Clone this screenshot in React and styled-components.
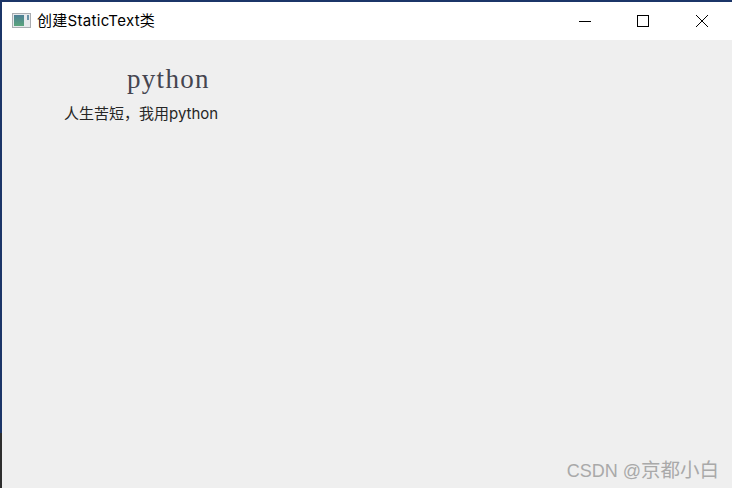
import React from 'react';
import styled, { createGlobalStyle } from 'styled-components';

const GlobalStyle = createGlobalStyle`
    html, body {
        margin: 0;
        padding: 0;
        width: 732px;
        height: 488px;
        overflow: hidden;
        background: #efefef;
    }
`;

const CJK = `Inter, "Noto Sans CJK SC", sans-serif`;

const Page = styled.div`
    display: flex;
    width: 732px;
    height: 488px;
`;

const DesktopEdge = styled.div`
    display: flex;
    flex-direction: column;
    flex: 0 0 2px;
    background: #1b3568;
    &::after {
        content: '';
        margin-top: auto;
        height: 55px;
        background: #2e2e2e;
    }
`;

const Window = styled.div`
    flex: 1;
    display: flex;
    flex-direction: column;
    border-top: 2px solid #1b3568;
    min-width: 0;
`;

const TitleBar = styled.div`
    display: flex;
    align-items: center;
    height: 38px;
    padding-left: 10px;
    background: #fff;
    flex: none;
`;

const AppIcon = styled.svg`
    width: 20px;
    height: 16px;
    margin-right: 5px;
    flex: none;
`;

const Title = styled.span`
    font: 15px/20px ${CJK};
    letter-spacing: 0.3px;
    color: #000;
`;

const Controls = styled.div`
    display: flex;
    margin-left: auto;
    height: 100%;
    padding-right: 1px;
`;

const ControlButton = styled.div`
    display: flex;
    align-items: center;
    justify-content: center;
    width: 58.5px;
    height: 100%;
    padding-bottom: 1px;
    box-sizing: border-box;
    svg {
        width: 14px;
        height: 14px;
    }
`;

const Body = styled.div`
    flex: 1;
    display: flex;
    flex-direction: column;
    background: #efefef;
    position: relative;
`;

const Heading = styled.div`
    margin: 25px 0 0 125px;
    font: 27px/28px "Liberation Serif", serif;
    letter-spacing: 1.3px;
    color: #45454f;
`;

const Label = styled.div`
    margin: 12px 0 0 62px;
    font: 15px/18px ${CJK};
    color: #262626;
`;

const Watermark = styled.div`
    position: absolute;
    right: 13px;
    bottom: 6px;
    font: 19.5px/22px "Noto Sans CJK SC", sans-serif;
    color: #a9a9a9;
`;

const WatermarkTag = styled.span`
    font: 18px/22px "Liberation Sans", sans-serif;
`;

const App = () => (
    <>
        <GlobalStyle />
        <Page>
            <DesktopEdge />
            <Window>
                <TitleBar>
                    <AppIcon viewBox="0 0 20 16">
                        <defs>
                            <linearGradient id="pane" x1="0" y1="0" x2="0" y2="1">
                                <stop offset="0" stopColor="#4d7f96" />
                                <stop offset="1" stopColor="#5aa57c" />
                            </linearGradient>
                        </defs>
                        <rect x="0.5" y="0.5" width="18" height="14" fill="#e6e9ec" stroke="#a9adb2" />
                        <rect x="2" y="2" width="10" height="11" fill="url(#pane)" />
                        <rect x="15" y="2" width="2" height="5" fill="#6a93a8" />
                    </AppIcon>
                    <Title>创建StaticText类</Title>
                    <Controls>
                        <ControlButton>
                            <svg viewBox="0 0 14 14"><path d="M1 7.5H13" stroke="#000" fill="none" /></svg>
                        </ControlButton>
                        <ControlButton>
                            <svg viewBox="0 0 14 14"><rect x="1.5" y="1.5" width="11" height="11" stroke="#000" fill="none" /></svg>
                        </ControlButton>
                        <ControlButton>
                            <svg viewBox="0 0 14 14"><path d="M1 1L13 13M13 1L1 13" stroke="#000" fill="none" /></svg>
                        </ControlButton>
                    </Controls>
                </TitleBar>
                <Body>
                    <Heading>python</Heading>
                    <Label>人生苦短，我用python</Label>
                    <Watermark><WatermarkTag>CSDN @</WatermarkTag>京都小白</Watermark>
                </Body>
            </Window>
        </Page>
    </>
);

export default App;
